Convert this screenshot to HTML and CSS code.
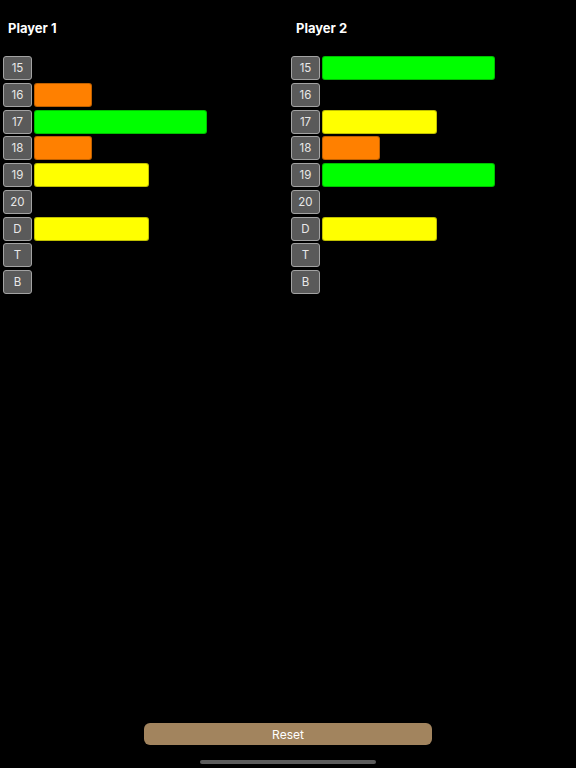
FILE: index.html
```html
<!DOCTYPE html>
<html lang="en">
<head>
  <meta charset="UTF-8">
  <meta name="viewport" content="width=device-width, initial-scale=1.0">
  <title>Darts Cricket</title>
  <link rel="stylesheet" href="styles.css">
</head>
<body>
  <div class="app">
    <div class="players">
      <div class="player">
        <h2>Player 1</h2>
        <div class="rows">
          <div class="row"><span class="num">15</span></div>
          <div class="row"><span class="num">16</span><span class="bar orange"></span></div>
          <div class="row"><span class="num">17</span><span class="bar green"></span></div>
          <div class="row"><span class="num">18</span><span class="bar orange"></span></div>
          <div class="row"><span class="num">19</span><span class="bar yellow"></span></div>
          <div class="row"><span class="num">20</span></div>
          <div class="row"><span class="num">D</span><span class="bar yellow"></span></div>
          <div class="row"><span class="num">T</span></div>
          <div class="row"><span class="num">B</span></div>
        </div>
      </div>
      <div class="player">
        <h2>Player 2</h2>
        <div class="rows">
          <div class="row"><span class="num">15</span><span class="bar green"></span></div>
          <div class="row"><span class="num">16</span></div>
          <div class="row"><span class="num">17</span><span class="bar yellow"></span></div>
          <div class="row"><span class="num">18</span><span class="bar orange"></span></div>
          <div class="row"><span class="num">19</span><span class="bar green"></span></div>
          <div class="row"><span class="num">20</span></div>
          <div class="row"><span class="num">D</span><span class="bar yellow"></span></div>
          <div class="row"><span class="num">T</span></div>
          <div class="row"><span class="num">B</span></div>
        </div>
      </div>
    </div>

    <div class="footer">
      <button class="reset">Reset</button>
      <div class="home-bar"></div>
    </div>
  </div>
</body>
</html>
```

FILE: styles.css
```css
html, body {
  margin: 0;
  background: #000;
  font-family: Inter, "Liberation Sans", Arial, sans-serif;
}
.app {
  height: 100vh;
  display: flex;
  flex-direction: column;
}
.players {
  flex: 1;
  display: grid;
  grid-template-columns: 1fr 1fr;
}
.player {
  padding-left: 3px;
}
.player h2 {
  margin: 20px 0 0 5px;
  font-size: 13px;
  line-height: 16px;
  font-weight: 700;
  color: #fff;
}
.rows {
  margin-top: 20px;
  display: flex;
  flex-direction: column;
  gap: 2.75px;
}
.row {
  display: flex;
  align-items: center;
  gap: 2px;
  height: 24px;
}
.num {
  box-sizing: border-box;
  width: 29px;
  height: 24px;
  display: flex;
  align-items: center;
  justify-content: center;
  background: #5a5a5a;
  border: 1px solid #a3a3a3;
  border-radius: 3px;
  color: #e8e8e8;
  font-size: 11.5px;
}
.bar {
  box-sizing: border-box;
  height: 24px;
  border-radius: 3px;
  border: 1px solid rgba(0,0,0,0.25);
}
.orange {
  width: 57.5px;
  background: #ff8000;
}
.yellow {
  width: 115px;
  background: #ffff00;
}
.green {
  width: 172.5px;
  background: #00ff00;
}
.footer {
  display: flex;
  flex-direction: column;
  align-items: center;
}
.reset {
  width: 288px;
  height: 22px;
  border: none;
  border-radius: 6px;
  background: #a2845e;
  color: #fff;
  font-family: inherit;
  font-size: 12px;
  padding: 0;
}
.home-bar {
  width: 176px;
  height: 4px;
  margin: 15px 0 4px;
  border-radius: 2px;
  background: #5c5c5c;
}
```
